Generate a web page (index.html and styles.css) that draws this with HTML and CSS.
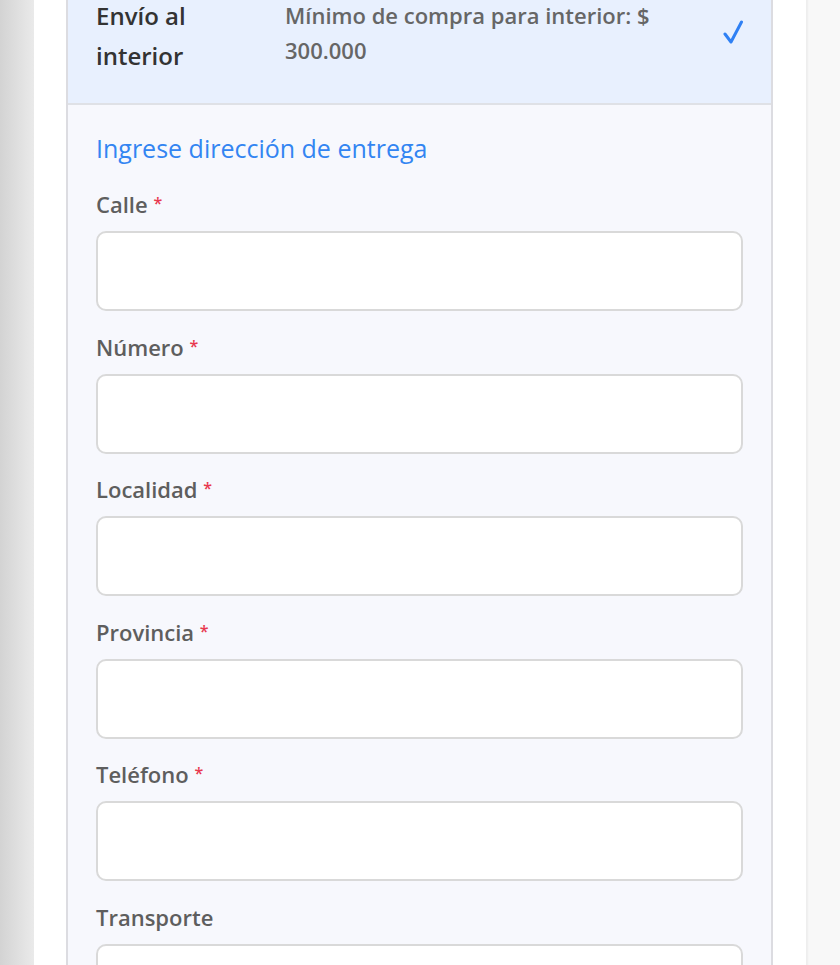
FILE: index.html
```html
<!DOCTYPE html>
<html lang="es">
<head>
    <meta charset="UTF-8">
    <meta name="viewport" content="width=device-width, initial-scale=1.0">
    <title>Envío al interior</title>
    <link rel="stylesheet" href="styles.css">
</head>
<body>

    <div class="page">
        <div class="side-left"></div>

        <div class="card">
            <div class="shipping-option">
                <div class="option-header">
                    <div class="option-title">Envío al interior</div>
                    <div class="option-desc">Mínimo de compra para interior: $ 300.000</div>
                    <svg class="option-check" width="20" height="24" viewBox="0 0 20 24">
                        <path d="M2 14 L8 22 L18.5 2" fill="none" stroke="#2f80f4" stroke-width="3" stroke-linecap="round" stroke-linejoin="round"/>
                    </svg>
                </div>

                <form class="address-form">
                    <h3 class="form-title">Ingrese dirección de entrega</h3>

                    <div class="field">
                        <label for="calle">Calle <span class="req">*</span></label>
                        <input type="text" id="calle">
                    </div>
                    <div class="field">
                        <label for="numero">Número <span class="req">*</span></label>
                        <input type="text" id="numero">
                    </div>
                    <div class="field">
                        <label for="localidad">Localidad <span class="req">*</span></label>
                        <input type="text" id="localidad">
                    </div>
                    <div class="field">
                        <label for="provincia">Provincia <span class="req">*</span></label>
                        <input type="text" id="provincia">
                    </div>
                    <div class="field">
                        <label for="telefono">Teléfono <span class="req">*</span></label>
                        <input type="text" id="telefono">
                    </div>
                    <div class="field">
                        <label for="transporte">Transporte</label>
                        <input type="text" id="transporte">
                    </div>
                </form>
            </div>
        </div>

        <div class="side-right"></div>
    </div>

</body>
</html>
```

FILE: styles.css
```css
body {
    margin: 0;
    font-family: "Open Sans", Lato, sans-serif;
    background-color: #f8f8f8;
    color: #333;
    overflow: hidden;
}

.page {
    display: flex;
    min-height: 965px;
    margin-top: -24px;
}

.side-left {
    width: 34px;
    flex-shrink: 0;
    background: linear-gradient(to right, #d3d3d3, #eaeaea);
}

.card {
    width: 772px;
    flex-shrink: 0;
    background-color: #fff;
    padding: 0 33px 0 32px;
    box-sizing: border-box;
}

.side-right {
    flex: 1;
    background-color: #f8f8f8;
    box-shadow: inset 2px 0 2px #eee;
}

.shipping-option {
    border: 2px solid #dcdce1;
    border-top: none;
    background-color: #f7f8fd;
}

.option-header {
    display: flex;
    align-items: flex-start;
    padding: 20px 28px 27px;
    background-color: #e8f0fe;
    border-bottom: 2px solid #dfe1e6;
}

.option-title {
    width: 150px;
    margin-right: 39px;
    flex-shrink: 0;
    font-size: 24px;
    font-weight: 600;
    line-height: 40px;
    color: #333;
}

.option-desc {
    flex: 1;
    font-size: 22px;
    font-weight: 600;
    line-height: 35px;
    color: #666;
    padding-top: 2px;
    padding-right: 30px;
}

.option-check {
    flex-shrink: 0;
    margin-top: 24px;
}

.address-form {
    padding: 28px 28px 20px;
}

.form-title {
    margin: 0 0 29px;
    font-size: 25px;
    font-weight: 400;
    line-height: 30px;
    color: #3385f2;
}

.field {
    margin-bottom: 23.5px;
}

.field label {
    display: block;
    margin-bottom: 15px;
    font-size: 22px;
    font-weight: 600;
    line-height: 24px;
    color: #5e5e5e;
}

.req {
    font-size: 16px;
    line-height: 0;
    vertical-align: 4px;
    color: #e8384f;
}

.field input {
    display: block;
    width: 100%;
    height: 80px;
    box-sizing: border-box;
    border: 2px solid #d9d9d9;
    border-radius: 10px;
    background-color: #fff;
    font-size: 20px;
    padding: 0 16px;
}
```
